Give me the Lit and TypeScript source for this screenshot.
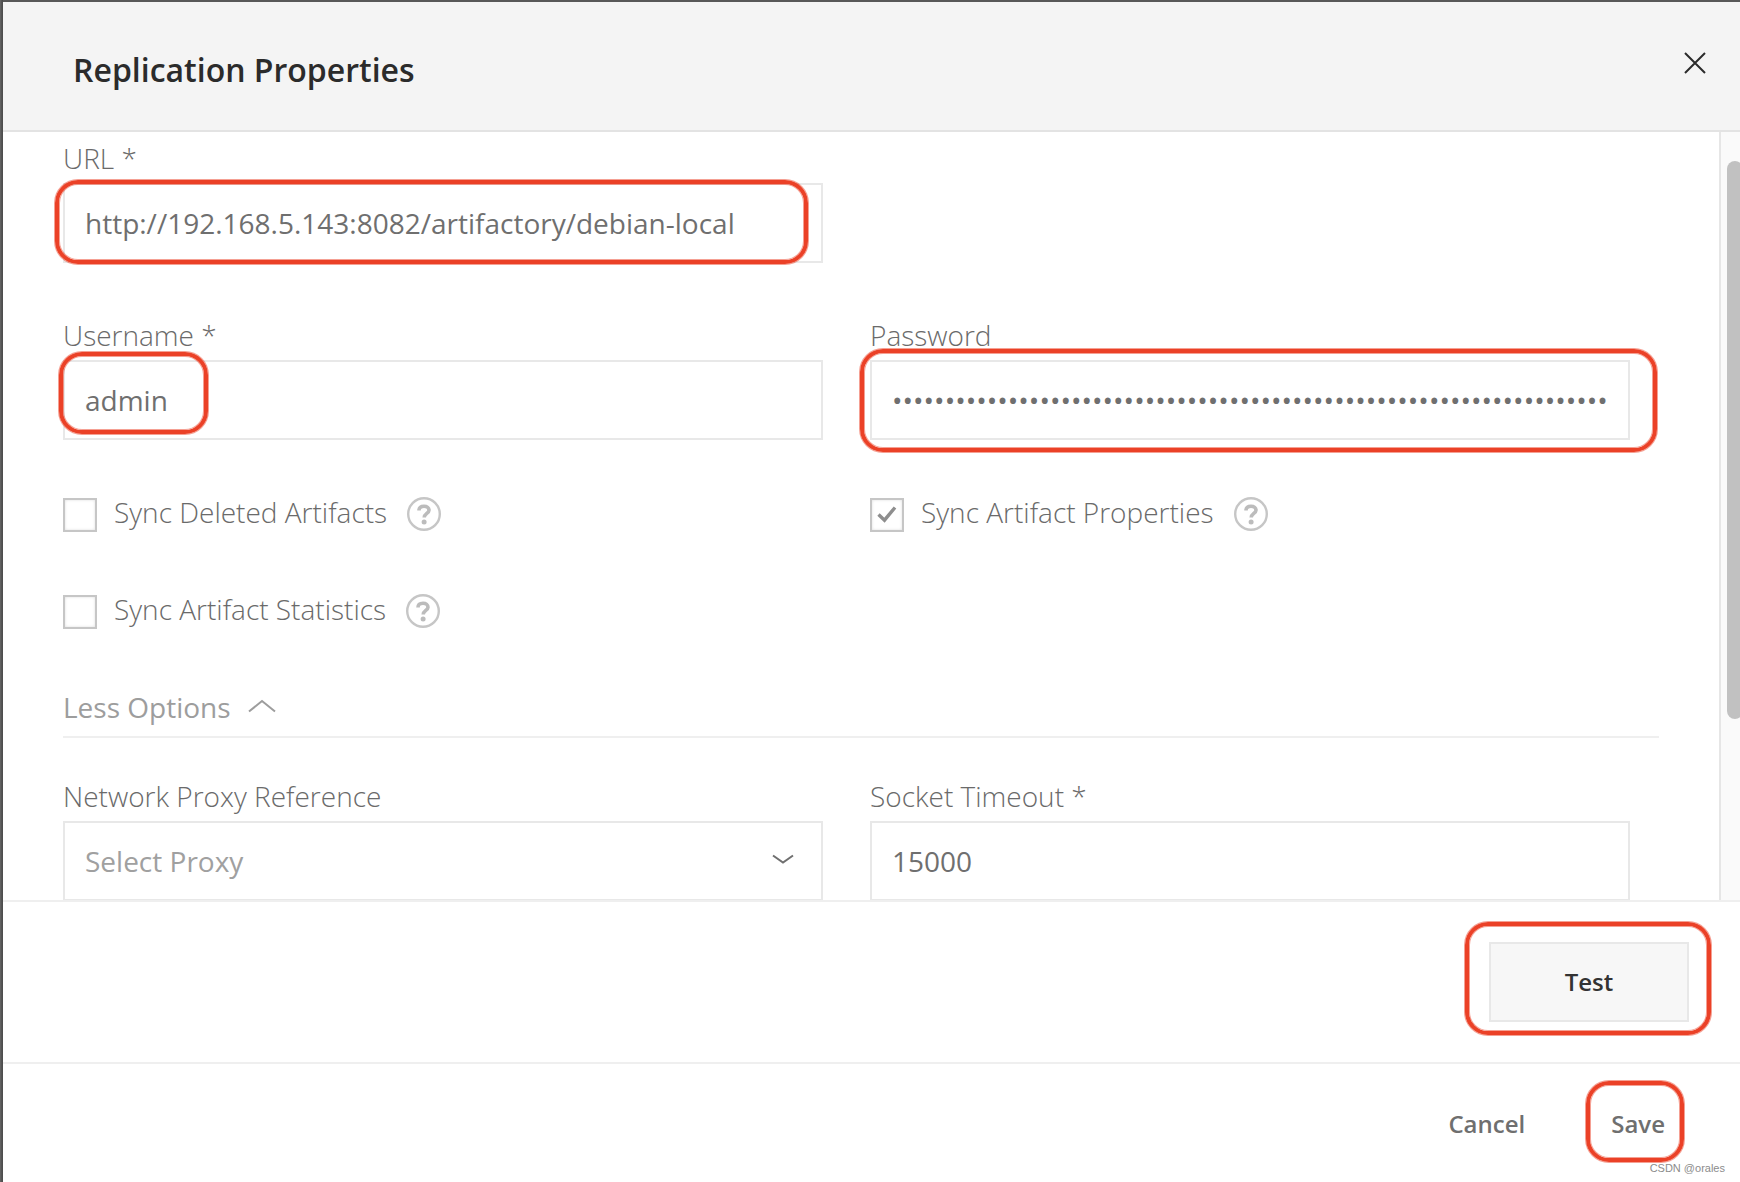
import { LitElement, html, css } from "lit";
import { customElement, state } from "lit/decorators.js";

@customElement("help-icon")
export class HelpIcon extends LitElement {
  static styles = css`
    :host { display: block; width: 34px; height: 34px; }
    svg { display: block; }
  `;
  render() {
    return html`<svg width="34" height="34" viewBox="0 0 34 34" fill="none" role="img" aria-label="Help">
      <circle cx="17" cy="17" r="15.800" stroke="#c6c6c6" stroke-width="2.400"/>
      <path d="M12 13.400C12 10.600 14 9.200 17 9.200S22 10.800 22 13.200C22 16.400 17.200 16.600 17.200 20.600" stroke="#bcbcbc" stroke-width="3.600"/>
      <circle cx="17.100" cy="24.900" r="2.500" fill="#bcbcbc"/>
    </svg>`;
  }
}

@customElement("app-root")
export class AppRoot extends LitElement {
  @state() private expanded = true;

  static styles = css`
    :host {
      display: block;
      font-family: "Open Sans", "Noto Sans", sans-serif;
      font-size: 28px;
      line-height: 38px;
      color: #6f6f6f;
    }
    * { box-sizing: border-box; }
    button, input, select { font: inherit; color: inherit; margin: 0; border-radius: 0; outline: none; }
    button { border: 0; background: none; padding: 0; cursor: pointer; }
    .backdrop {
      height: 100vh; padding: 2px 0 0 3px; overflow: hidden;
      background: linear-gradient(90deg, #6a6a6a 0, #585858 1px, #4a4a4a 3px, #585858 3px);
    }
    .dialog { height: 100%; display: flex; flex-direction: column; background: #fff; position: relative; }
    .head {
      display: flex; justify-content: space-between; align-items: flex-start;
      height: 130px; padding: 46px 34px 0 70px;
      background: #f4f4f4; border-bottom: 2px solid #e3e3e3;
    }
    h1 { margin: 0; font-size: 32px; line-height: 44px; font-weight: 600; color: #2b2b2b; }
    .close { display: block; width: 22px; height: 22px; margin-top: 4px; }
    .close svg { display: block; }
    .body { flex: 1; min-height: 0; display: flex; overflow: hidden; }
    .form { flex: 1; min-width: 0; padding: 7px 60px 0; display: flex; flex-direction: column; }
    .grid { display: grid; grid-template-columns: 1fr 1fr; column-gap: 47px; row-gap: 53px; padding-right: 29px; }
    .field { display: flex; flex-direction: column; gap: 6px; }
    .start { grid-column: 1; }
    label { font-weight: 300; color: #6a6a6a; }
    .control { position: relative; }
    .box {
      display: block; width: 100%; height: 80px; padding: 0 20px;
      border: 2px solid #e8e8e8; background: #fff; appearance: none;
    }
    select.box { color: #a0a0a0; }
    .caret { position: absolute; right: 29px; top: 33px; pointer-events: none; }
    .checks { display: grid; grid-template-columns: 1fr 1fr; column-gap: 47px; row-gap: 58px; padding: 53px 29px 0 0; }
    .check { display: flex; height: 39px; }
    .tick {
      appearance: none; align-self: flex-end; width: 34px; height: 34px;
      border: 2px solid #c6c6c6; background: #fff; box-shadow: inset 0 0 3px #ddd;
    }
    .tickbox { position: relative; display: flex; margin-right: 17px; }
    .tickbox svg { position: absolute; left: 7px; bottom: 9px; pointer-events: none; }
    .check help-icon { margin: 4px 0 0 20px; }
    .toggle {
      display: flex; align-items: flex-start; gap: 17px; margin-top: 59px; padding-bottom: 10px;
      border-bottom: 2px solid #efefef; color: #9d9d9d;
    }
    .toggle svg { margin-top: 11px; }
    .more { margin-top: 39px; }
    .track { width: 21px; padding: 29px 0 24px 6px; background: #fafafa; border-left: 2px solid #e6e6e6; overflow: hidden; }
    .thumb { width: 16px; height: 78%; border-radius: 8px; background: #c1c1c1; }
    .bar { display: flex; justify-content: flex-end; border-top: 2px solid #efefef; font-size: 24px; line-height: 33px; font-weight: 600; }
    .actions { padding: 40px 51px; }
    .test { display: block; width: 200px; height: 80px; padding-bottom: 2px; background: #f7f7f7; border: 2px solid #e8e8e8; color: #333; }
    .foot { gap: 86px; padding: 43px 75px 42px; }
    .mark {
      position: absolute; pointer-events: none; border: 4px solid #eb4127; border-radius: 23px;
      box-shadow: 0 0 0 1px rgba(235, 65, 39, 0.5), inset 0 0 0 1px rgba(235, 65, 39, 0.5);
    }
    .mark-url { left: -8px; top: -3px; right: 15px; bottom: -1px; }
    .mark-user { left: -4px; top: -8px; width: 149px; height: 82px; }
    .mark-pass { left: -10px; top: -11px; right: -27px; bottom: -12px; }
    .mark-test { left: -24px; top: -20px; right: -22px; bottom: -13px; }
    .mark-save { left: -25px; top: -26px; right: -19px; bottom: -22px; }
    .credit {
      position: absolute; right: 15px; bottom: 6px; font-family: "Liberation Sans", sans-serif;
      font-size: 11px; line-height: 16px; color: #8c8c8c;
    }
  `;

  private check(id: string, text: string, on = false) {
    return html`<div class="check">
      <span class="tickbox"><input class="tick" type="checkbox" id=${id} .checked=${on}>
        ${on ? html`<svg width="20" height="17" viewBox="0 0 20 17" fill="none"><path d="M1.500 8.500L7.500 14.200L18 1.500" stroke="#8e8e8e" stroke-width="3.400"/></svg>` : ""}
      </span>
      <label for=${id}>${text}</label>
      <help-icon></help-icon>
    </div>`;
  }

  render() {
    return html`<div class="backdrop">
      <div class="dialog" role="dialog" aria-labelledby="title">
        <header class="head">
          <h1 id="title">Replication Properties</h1>
          <button class="close" aria-label="Close">
            <svg width="22" height="22" viewBox="0 0 22 22"><path d="M1 1L21 21M21 1L1 21" stroke="#2b2b2b" stroke-width="2"/></svg>
          </button>
        </header>
        <div class="body">
          <form class="form">
            <div class="grid">
              <div class="field start">
                <label for="url">URL *</label>
                <div class="control">
                  <input class="box" id="url" type="text" value="http://192.168.5.143:8082/artifactory/debian-local">
                  <span class="mark mark-url"></span>
                </div>
              </div>
              <div class="field start">
                <label for="user">Username *</label>
                <div class="control">
                  <input class="box" id="user" type="text" value="admin">
                  <span class="mark mark-user"></span>
                </div>
              </div>
              <div class="field">
                <label for="pass">Password</label>
                <div class="control">
                  <input class="box" id="pass" type="password" value=${"x".repeat(68)}>
                  <span class="mark mark-pass"></span>
                </div>
              </div>
            </div>
            <div class="checks">
              ${this.check("deleted", "Sync Deleted Artifacts")}
              ${this.check("properties", "Sync Artifact Properties", true)}
              ${this.check("statistics", "Sync Artifact Statistics")}
            </div>
            <button class="toggle" type="button" aria-expanded=${this.expanded} @click=${() => (this.expanded = !this.expanded)}>
              Less Options
              <svg width="28" height="14" viewBox="0 0 28 14" fill="none"><path d="M1 12.500L14 2L27 12.500" stroke="#9d9d9d" stroke-width="2"/></svg>
            </button>
            ${this.expanded ? html`<div class="grid more">
              <div class="field">
                <label for="proxy">Network Proxy Reference</label>
                <div class="control">
                  <select class="box" id="proxy"><option>Select Proxy</option></select>
                  <svg class="caret" width="22" height="12" viewBox="0 0 22 12" fill="none"><path d="M1 1.500L11 8.500L21 1.500" stroke="#6f6f6f" stroke-width="2"/></svg>
                </div>
              </div>
              <div class="field">
                <label for="timeout">Socket Timeout *</label>
                <input class="box" id="timeout" type="text" value="15000">
              </div>
            </div>` : ""}
          </form>
          <div class="track"><div class="thumb"></div></div>
        </div>
        <div class="bar actions">
          <div class="control"><button class="test">Test</button><span class="mark mark-test"></span></div>
        </div>
        <footer class="bar foot">
          <button>Cancel</button>
          <div class="control"><button>Save</button><span class="mark mark-save"></span></div>
        </footer>
        <span class="credit">CSDN @orales</span>
      </div>
    </div>`;
  }
}
